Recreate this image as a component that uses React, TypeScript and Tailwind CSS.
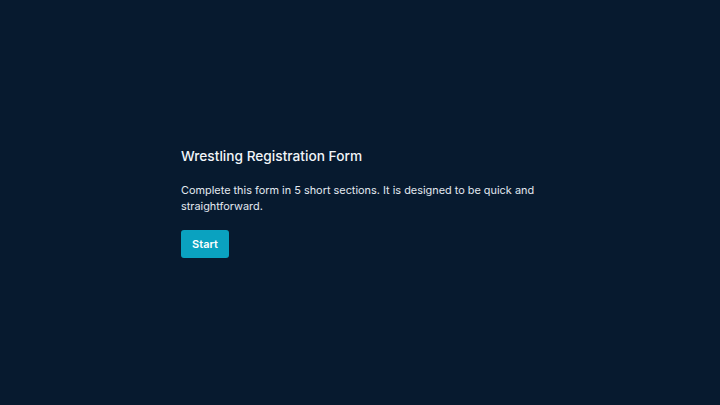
export default function App() {
  return (
    <div
      className="flex h-[405px] w-[720px] items-center justify-center bg-[#071a2f] text-white"
      style={{ fontFamily: "Inter, 'Noto Sans', sans-serif" }}
    >
      <div className="w-[358px]">
        <h1 className="text-[13.7px] font-medium leading-[18px] text-[#f1f5f9]">Wrestling Registration Form</h1>
        <p className="mt-[17px] text-[10.9px] leading-[16px] text-[#e2e8f0]">
          Complete this form in 5 short sections. It is designed to be quick and straightforward.
        </p>
        <button
          type="button"
          className="mt-[16px] h-[28px] w-[48px] rounded-[3px] bg-[#0aa2c0] text-[11px] font-semibold text-white"
        >
          Start
        </button>
      </div>
    </div>
  );
}
